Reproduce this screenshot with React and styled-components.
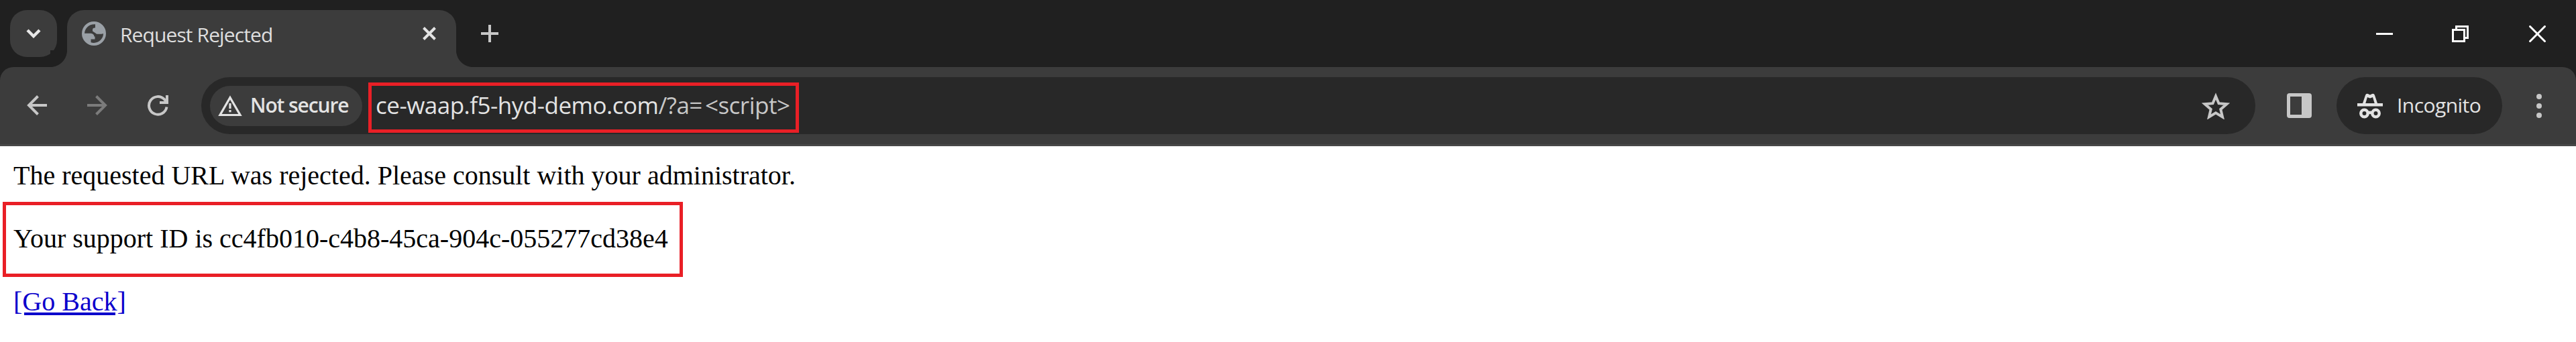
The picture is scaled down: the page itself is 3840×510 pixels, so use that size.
import React from "react";
import styled, { createGlobalStyle } from "styled-components";

const Global = createGlobalStyle`
  html, body { margin: 0; padding: 0; background: #fff; }
  * { box-sizing: border-box; }
  body { width: 3840px; height: 510px; overflow: hidden; }
  svg { display: block; flex: none; }
`;

const ui = `"Open Sans", "Noto Sans", sans-serif`;

const Window = styled.div`
  display: flex;
  flex-direction: column;
  width: 3840px;
  height: 510px;
  background: #202020;
  font-family: ${ui};
  color: #e3e3e3;
`;

const TabStrip = styled.header`
  display: flex;
  height: 100px;
  padding: 15px 0 0 15px;
  background: #202020;
`;

const TabSearch = styled.button`
  display: flex;
  align-items: center;
  justify-content: center;
  width: 70px;
  height: 70px;
  padding: 0;
  border: 0;
  border-radius: 25px;
  background: #3c3c3c;
`;

const Tab = styled.div`
  position: relative;
  display: flex;
  align-items: center;
  width: 580px;
  height: 85px;
  margin-left: 15px;
  padding: 0 30px 15px 22px;
  border-radius: 25px 25px 0 0;
  background: #3c3c3c;

  &::before,
  &::after {
    content: "";
    position: absolute;
    bottom: 0;
    width: 25px;
    height: 25px;
  }
  &::before {
    left: -25px;
    background: radial-gradient(circle at 0 0, #202020 24.6px, #3c3c3c 25.4px);
  }
  &::after {
    right: -25px;
    background: radial-gradient(circle at 100% 0, #202020 24.6px, #3c3c3c 25.4px);
  }
`;

const Label = styled.span`
  font-size: ${(p) => p.$size || 30}px;
  font-weight: ${(p) => p.$weight || 400};
  letter-spacing: ${(p) => p.$spacing || 0}px;
  line-height: 42px;
  padding-bottom: 2px;
  white-space: nowrap;
`;

const TabTitle = styled(Label)`
  flex: 1;
  margin-left: 21px;
  padding: 3px 0 0;
  color: #dfdfdf;
`;

const NewTab = styled.div`
  display: flex;
  align-items: center;
  height: 70px;
  margin-left: 37px;
`;

const WindowControls = styled.div`
  display: flex;
  align-items: center;
  gap: 88px;
  height: 70px;
  margin-left: auto;
  padding-right: 45px;

  & > :last-child {
    margin-left: 2px;
  }
`;

const Toolbar = styled.nav`
  display: flex;
  align-items: center;
  height: 118px;
  padding: 0 51px 0 40px;
  border-bottom: 3px solid #474747;
  border-radius: 20px 20px 0 0;
  background: #3c3c3c;
`;

const NavButtons = styled.div`
  display: flex;
  gap: 60px;
  width: 260px;
`;

const AddressBar = styled.div`
  position: relative;
  display: flex;
  align-items: center;
  width: 3062px;
  height: 85px;
  padding: 0 38px 0 13px;
  border-radius: 43px;
  background: #282828;
`;

const SecurityChip = styled.div`
  display: flex;
  align-items: center;
  width: 227px;
  height: 60px;
  padding-left: 12px;
  border-radius: 30px;
  background: #3c3c3c;
`;

const ChipLabel = styled(Label)`
  margin-left: 12px;
`;

const Url = styled(Label)`
  flex: 1;
  margin-left: 20px;
  padding-bottom: 2px;
  color: #e3e3e3;
`;

const UrlPath = styled.span`
  color: #c7c7c7;
`;

const UrlValue = styled(UrlPath)`
  margin-left: 4px;
`;

const Highlight = styled.div`
  position: absolute;
  border: 5px solid #e91f26;
  pointer-events: none;
`;

const UrlHighlight = styled(Highlight)`
  left: 249px;
  top: 8px;
  width: 642px;
  height: 75px;
`;

const SupportHighlight = styled(Highlight)`
  left: 4px;
  top: 83px;
  width: 1014px;
  height: 112px;
`;

const PanelButton = styled.div`
  margin-left: 47px;
`;

const IncognitoChip = styled.div`
  display: flex;
  align-items: center;
  width: 247px;
  height: 85px;
  margin-left: 37px;
  padding-left: 31px;
  border-radius: 43px;
  background: #282828;
`;

const IncognitoLabel = styled(Label)`
  margin-left: 21px;
`;

const Menu = styled.div`
  margin-left: auto;
`;

const Page = styled.main`
  position: relative;
  flex: 1;
  padding: 20px;
  background: #fff;
  color: #000;
  font-family: "Liberation Serif", "Times New Roman", serif;
  font-size: 40px;
  line-height: 47px;
`;

const Line = styled.p`
  margin: 0 0 47px;
  white-space: nowrap;
`;

const BackLink = styled.a`
  color: #0c00cc;
  text-decoration: underline;
  text-decoration-thickness: 4px;
  text-underline-offset: 3px;
`;

export default function App() {
  return (
    <>
      <Global />
      <Window>
        <TabStrip>
          <TabSearch>
            <svg width="22" height="14" viewBox="0 0 22 14" fill="none" stroke="#e8e8e8" strokeWidth="4.4">
              <path d="M2 2l9 9 9-9" />
            </svg>
          </TabSearch>
          <Tab>
            <svg width="36" height="36" viewBox="0 0 36 36">
              <circle cx="18" cy="18" r="18" fill="#9aa0a6" />
              <path d="M20 4.200C11 3.500 4.500 9.500 4 17.800H13.500Q18 18.300 18.500 22.500H19.500V26.500H13.500V31.300Q22 33.500 28 27.500Q32 23.500 32 18Q30.500 18.800 29 18.800H23Q21.500 18.800 20.500 17.500L16 14.500V12.500Q16 9.500 19 9.500H20Z" fill="#3c3c3c" />
            </svg>
            <TabTitle $spacing={-0.9}>Request Rejected</TabTitle>
            <svg width="20" height="20" viewBox="0 0 20 20" stroke="#e3e3e3" strokeWidth="4">
              <path d="M1.500 1.500l17 17M18.500 1.500l-17 17" />
            </svg>
          </Tab>
          <NewTab>
            <svg width="26" height="26" viewBox="0 0 26 26" stroke="#c7c7c7" strokeWidth="4">
              <path d="M13 0v26M0 13h26" />
            </svg>
          </NewTab>
          <WindowControls>
            <svg width="25" height="25" viewBox="0 0 25 25">
              <path d="M0 11h25v3H0z" fill="#fff" />
            </svg>
            <svg width="25" height="25" viewBox="0 0 25 25" fill="none" stroke="#fff" strokeWidth="3">
              <path d="M1.500 6.500h17v17h-17zM6.500 6.500v-5h17v17h-5" />
            </svg>
            <svg width="25" height="25" viewBox="0 0 25 25" stroke="#fff" strokeWidth="3">
              <path d="M.5.5l24 24M24.500.5l-24 24" />
            </svg>
          </WindowControls>
        </TabStrip>
        <Toolbar>
          <NavButtons>
            <svg width="30" height="30" viewBox="0 0 30 30" fill="none" stroke="#c7c7c7" strokeWidth="4">
              <path d="M30 15H3M16.500 1.500L3 15l13.500 13.500" />
            </svg>
            <svg width="30" height="30" viewBox="0 0 30 30" fill="none" stroke="#7b7b7b" strokeWidth="4">
              <path d="M0 15h27M13.500 1.500L27 15 13.500 28.500" />
            </svg>
            <svg width="31" height="31" viewBox="0 0 31 31" fill="none" stroke="#c7c7c7" strokeWidth="4">
              <path d="M28.500 17.500A13.300 13.300 0 1 1 25 6.200L28 9.500M29 0V11H18" />
            </svg>
          </NavButtons>
          <AddressBar>
            <SecurityChip>
              <svg width="36" height="32" viewBox="0 0 36 32">
                <path d="M18 3.500L33 29.500H3z" fill="none" stroke="#e3e3e3" strokeWidth="3.200" />
                <path d="M16.400 12h3.200v8h-3.200zM16.400 22h3.200v3.200h-3.200z" fill="#e3e3e3" />
              </svg>
              <ChipLabel $weight={600} $spacing={-1.1}>Not secure</ChipLabel>
            </SecurityChip>
            <Url $size={35} $spacing={-0.5}>
              ce-waap.f5-hyd-demo.com<UrlPath>/?a=</UrlPath><UrlValue>&lt;script&gt;</UrlValue>
            </Url>
            <svg width="42" height="40" viewBox="0 0 42 40" fill="none" stroke="#c7c7c7" strokeWidth="4">
              <path d="M21 5.500l4.500 10.700 11.700 1-8.900 7.700 2.700 11.500-10-6.100-10 6.100 2.700-11.500-8.900-7.700 11.700-1z" />
            </svg>
            <UrlHighlight />
          </AddressBar>
          <PanelButton>
            <svg width="37" height="37" viewBox="0 0 37 37">
              <rect width="37" height="37" rx="4" fill="#c7c7c7" />
              <path d="M5 5h17v27H5z" fill="#3c3c3c" />
            </svg>
          </PanelButton>
          <IncognitoChip>
            <svg width="38" height="38" viewBox="0 0 38 38" fill="#e3e3e3">
              <path d="M0 15h8l4-12q1-3 4-2l3 1.500 3-1.500q3-1 4 2l4 12h8v4.500H0z" />
              <path d="M15 6L12.300 15h13.400L23 6l-4 1.500z" fill="#282828" />
              <g fill="none" stroke="#e3e3e3" strokeWidth="4.500">
                <circle cx="10.500" cy="30" r="5.200" />
                <circle cx="27.500" cy="30" r="5.200" />
                <path d="M15.500 29.500q3.500-1.500 7 0" />
              </g>
            </svg>
            <IncognitoLabel $spacing={-0.55}>Incognito</IncognitoLabel>
          </IncognitoChip>
          <Menu>
            <svg width="8" height="36" viewBox="0 0 8 36" fill="#c7c7c7">
              <circle cx="4" cy="4" r="4" />
              <circle cx="4" cy="18" r="4" />
              <circle cx="4" cy="32" r="4" />
            </svg>
          </Menu>
        </Toolbar>
        <Page>
          <Line>The requested URL was rejected. Please consult with your administrator.</Line>
          <Line>Your support ID is cc4fb010-c4b8-45ca-904c-055277cd38e4</Line>
          <BackLink>[Go Back]</BackLink>
          <SupportHighlight />
        </Page>
      </Window>
    </>
  );
}
